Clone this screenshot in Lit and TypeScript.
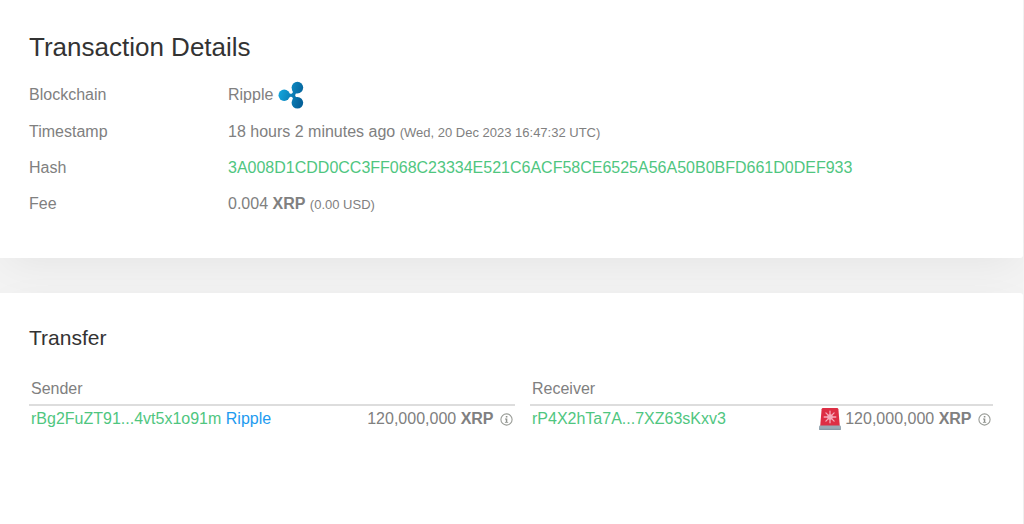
import { LitElement, html, css } from "lit";
import { customElement, property } from "lit/decorators.js";

const infoIcon = html`<svg width="13" height="13" viewBox="0 0 13 13" aria-hidden="true">
  <circle cx="6.5" cy="6.5" r="5.6" fill="none" stroke="#9a9d98" stroke-width="1.1" />
  <rect x="5.8" y="3" width="1.6" height="1.5" fill="#8f928d" />
  <path d="M5 5.5h2.3v3.4h.9v.9H4.9v-.9h.9V6.4H5z" fill="#8f928d" />
</svg>`;

const rippleIcon = html`<svg class="ripple" width="26" height="28" viewBox="0 0 26 28" role="img" aria-label="XRP logo">
  <defs>
    <linearGradient id="g" gradientUnits="userSpaceOnUse" x1="1" y1="10" x2="24" y2="17">
      <stop offset="0" stop-color="#12a5dc" />
      <stop offset="0.55" stop-color="#0c80b8" />
      <stop offset="1" stop-color="#05629a" />
    </linearGradient>
  </defs>
  <g fill="url(#g)">
    <circle cx="6.2" cy="14.3" r="5.7" />
    <circle cx="19.4" cy="6.6" r="5.8" />
    <circle cx="19.4" cy="21.8" r="5.8" />
    <path d="M10 11.4Q12 13.4 14 12.4Q15.6 11.6 14.4 9.2L17 8L20 11.8Q17.2 12 17.1 14.2Q17.2 16.4 20 16.6L17 20.4L14.4 19.2Q15.6 16.8 14 16Q12 15 10 17.2Z" />
  </g>
</svg>`;

const alarmIcon = html`<svg class="alarm" width="22" height="22" viewBox="0 0 22 22" role="img" aria-label="Alert">
  <path d="M2.6 1.2Q2.8 0 4 0H18Q19.2 0 19.4 1.2L20.8 18H1.2Z" fill="#dd2e44" />
  <rect x="0" y="17.6" width="22" height="4.4" rx="1.2" fill="#99aab5" />
  <path d="M0 20.8H22Q22 22 20.8 22H1.2Q0 22 0 20.8Z" fill="#8899a6" />
  <g stroke="#f4abba" stroke-width="1.3" stroke-linecap="round">
    <path d="M11 3.2V14.8M5.2 9H16.8M6.9 4.9L15.1 13.1M15.1 4.9L6.9 13.1" />
  </g>
  <circle cx="11" cy="9" r="2.8" fill="#f4abba" />
</svg>`;

@customElement("transfer-party")
class TransferParty extends LitElement {
  @property() heading = "";
  @property() address = "";
  @property() owner = "";
  @property() amount = "";
  @property({ type: Boolean }) alert = false;

  static styles = css`
    :host { display: block; }
    table { width: 100%; border-collapse: collapse; }
    th, td { padding: 0 2px; line-height: 26px; font-weight: 400; text-align: left; white-space: nowrap; }
    th { padding-bottom: 2px; border-bottom: 2px solid #dddddd; }
    a { color: #4fc67f; text-decoration: none; }
    .owner { color: #1d9bf0; }
    .amount { text-align: right; }
    .info { border: 0; padding: 0; margin: 0 0 0 2px; background: none; font: inherit; vertical-align: -2px; line-height: 0; cursor: pointer; }
    .alarm { vertical-align: -6px; }
  `;

  render() {
    return html`<table>
      <thead><tr><th colspan="2" scope="col">${this.heading}</th></tr></thead>
      <tbody><tr>
        <td><a href="#">${this.address}</a>${this.owner ? html` <a class="owner" href="#">${this.owner}</a>` : ""}</td>
        <td class="amount">${this.alert ? alarmIcon : ""} ${this.amount} <b>XRP</b>
          <button class="info" type="button" aria-label="Information">${infoIcon}</button></td>
      </tr></tbody>
    </table>`;
  }
}

@customElement("app-root")
class AppRoot extends LitElement {
  static styles = css`
    :host {
      display: flex; flex-direction: column; gap: 35px; min-height: 100vh;
      box-sizing: border-box; padding-right: 1px; background: #f3f3f3; overflow: hidden;
      font: 16px/26px "Liberation Sans", Arial, sans-serif; color: #808080;
    }
    .card {
      background: #fff; border-radius: 0 0 3px 0; padding: 29px 30px 41px 29px;
      box-shadow: 0 10px 40px -8px rgba(0, 0, 0, 0.07);
    }
    .grow { flex: 1; border-radius: 0 3px 0 0; }
    h1, h2 { margin: 0; font-weight: 400; color: #333; }
    h1 { font-size: 26px; line-height: 36px; margin-bottom: 16px; }
    h2 { font-size: 21px; line-height: 32px; margin-bottom: 22px; }
    dl { display: grid; grid-template-columns: 199px 1fr; row-gap: 10px; align-items: center; margin: 0; }
    dd { margin: 0; overflow-wrap: anywhere; }
    small { font-size: 13px; line-height: 16px; }
    a { color: #4fc67f; text-decoration: none; }
    .chain { display: flex; align-items: center; gap: 5px; }
    .parties { display: grid; grid-template-columns: 486fr 463fr; gap: 15px; }
  `;

  render() {
    return html`
      <section class="card">
        <h1>Transaction Details</h1>
        <dl>
          <dt>Blockchain</dt><dd class="chain">Ripple ${rippleIcon}</dd>
          <dt>Timestamp</dt><dd>18 hours 2 minutes ago <small>(Wed, 20 Dec 2023 16:47:32 UTC)</small></dd>
          <dt>Hash</dt><dd><a href="#">3A008D1CDD0CC3FF068C23334E521C6ACF58CE6525A56A50B0BFD661D0DEF933</a></dd>
          <dt>Fee</dt><dd>0.004 <b>XRP</b> <small>(0.00 USD)</small></dd>
        </dl>
      </section>
      <section class="card grow">
        <h2>Transfer</h2>
        <div class="parties">
          <transfer-party heading="Sender" address="rBg2FuZT91...4vt5x1o91m" owner="Ripple" amount="120,000,000"></transfer-party>
          <transfer-party heading="Receiver" address="rP4X2hTa7A...7XZ63sKxv3" amount="120,000,000" alert></transfer-party>
        </div>
      </section>`;
  }
}
